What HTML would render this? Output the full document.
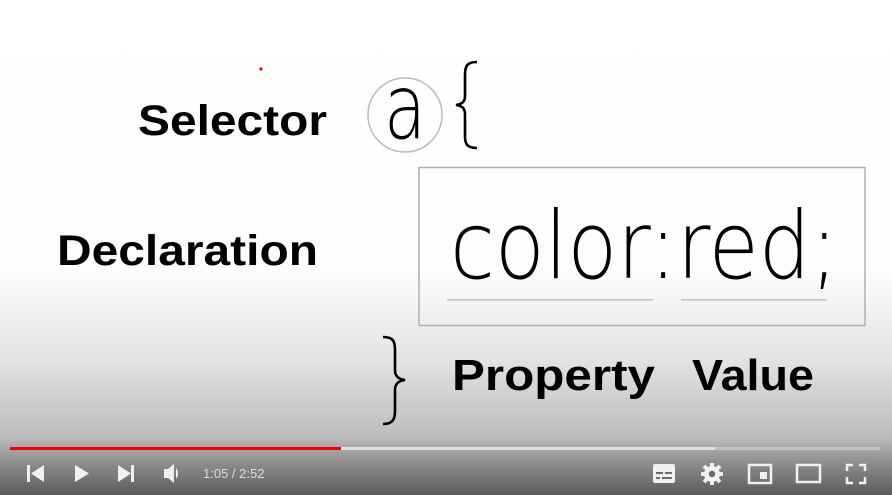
<!DOCTYPE html>
<html><head><meta charset="utf-8"><style>html,body{margin:0;padding:0;width:892px;height:495px;overflow:hidden;background:#fff}</style></head>
<body>
<svg width="892" height="495" viewBox="0 0 892 495" xmlns="http://www.w3.org/2000/svg">
<defs>
<linearGradient id="g" x1="0" y1="0" x2="0" y2="1">
<stop offset="0" stop-color="#fff"/>
<stop offset="0.55" stop-color="#fdfdfd"/>
<stop offset="0.72" stop-color="#e4e4e4"/>
<stop offset="0.88" stop-color="#bdbdbd"/>
<stop offset="0.94" stop-color="#8a8a8a"/>
<stop offset="1" stop-color="#5a5a5a"/>
</linearGradient>
</defs>
<rect width="892" height="495" fill="url(#g)"/>
<circle cx="261" cy="69" r="1.6" fill="#d00"/>
<g font-family="Liberation Sans, sans-serif" font-weight="bold" fill="#000">
<text x="138" y="135" font-size="43" textLength="189" lengthAdjust="spacingAndGlyphs">Selector</text>
<text x="57" y="265" font-size="43" textLength="261" lengthAdjust="spacingAndGlyphs">Declaration</text>
<text x="452" y="390" font-size="44" textLength="203" lengthAdjust="spacingAndGlyphs">Property</text>
<text x="692" y="390" font-size="44" textLength="122" lengthAdjust="spacingAndGlyphs">Value</text>
</g>
<circle cx="405" cy="115" r="37" fill="none" stroke="#bbb" stroke-width="1.5"/>
<g transform="scale(1,1.2)">
<text x="384" y="115" font-family="DejaVu Sans, sans-serif" font-weight="200" font-size="75" textLength="42" lengthAdjust="spacingAndGlyphs" fill="#000">a</text>
</g>
<path d="M477 62 C467 62 465 66 465 75 L465 96 C465 101 463 104 456 105 C463 106 465 109 465 114 L465 136 C465 144 467 148 477 148" fill="none" stroke="#000" stroke-width="2.6"/>
<path d="M383 337 C393 337 395 341 395 350 L395 370 C395 375 397 379 405 380 C397 381 395 385 395 390 L395 411 C395 419 393 424 383 424" fill="none" stroke="#000" stroke-width="2.6"/>
<rect x="419" y="167.5" width="446" height="158" fill="none" stroke="#b0b0b0" stroke-width="1.5"/>
<g transform="scale(1,1.12)">
<text x="450" y="248.2" font-family="DejaVu Sans, sans-serif" font-weight="200" font-size="84" textLength="388" lengthAdjust="spacingAndGlyphs" fill="#000">color:red;</text>
</g>
<rect x="447" y="299" width="206" height="1.5" fill="#c4c4c4"/>
<rect x="681" y="299" width="146" height="1.5" fill="#c4c4c4"/>
<rect x="10" y="447" width="870" height="3" fill="#c8c8c8" opacity="0.8"/>
<rect x="10" y="447" width="705" height="3" fill="#e2e2e2"/>
<rect x="10" y="447" width="331" height="3" fill="#e00"/>
<g fill="#f0f0f0">
<rect x="27" y="465" width="3" height="17"/><path d="M31 473.5 L44 465 L44 482 Z"/>
<path d="M75 465 L89 473.5 L75 482 Z"/>
<path d="M118 465 L131 473.5 L118 482 Z"/><rect x="131" y="465" width="3" height="17"/>
<path d="M164 469 L168 469 L174 464 L174 483 L168 478 L164 478 Z"/>
<path d="M176 468 Q180 473.5 176 479 Z"/>
<text x="203" y="478" font-family="Liberation Sans, sans-serif" font-size="13" fill="#ddd">1:05 / 2:52</text>
<rect x="653" y="464" width="22" height="19" rx="2"/>
<rect x="749" y="465" width="22" height="18" fill="none" stroke="#f0f0f0" stroke-width="2.5"/>
<rect x="760" y="472" width="7" height="7"/>
<rect x="797" y="465" width="23" height="17" fill="none" stroke="#f0f0f0" stroke-width="2.5"/>
<path d="M847 471 V465 H853 M859 465 H865 V471 M865 477 V483 H859 M853 483 H847 V477" fill="none" stroke="#f0f0f0" stroke-width="2.5"/>
<circle cx="712" cy="474" r="8"/>
<g stroke="#f0f0f0" stroke-width="4"><line x1="712" y1="463" x2="712" y2="485"/><line x1="701" y1="474" x2="723" y2="474"/><line x1="704" y1="466" x2="720" y2="482"/><line x1="720" y1="466" x2="704" y2="482"/></g>
<circle cx="712" cy="474" r="3.2" fill="#6a6a6a"/>
</g>
<g fill="#6a6a6a"><rect x="656" y="472" width="7" height="2"/><rect x="665" y="472" width="7" height="2"/><rect x="656" y="477" width="4" height="2"/><rect x="662" y="477" width="10" height="2"/></g>
</svg>
</body></html>
